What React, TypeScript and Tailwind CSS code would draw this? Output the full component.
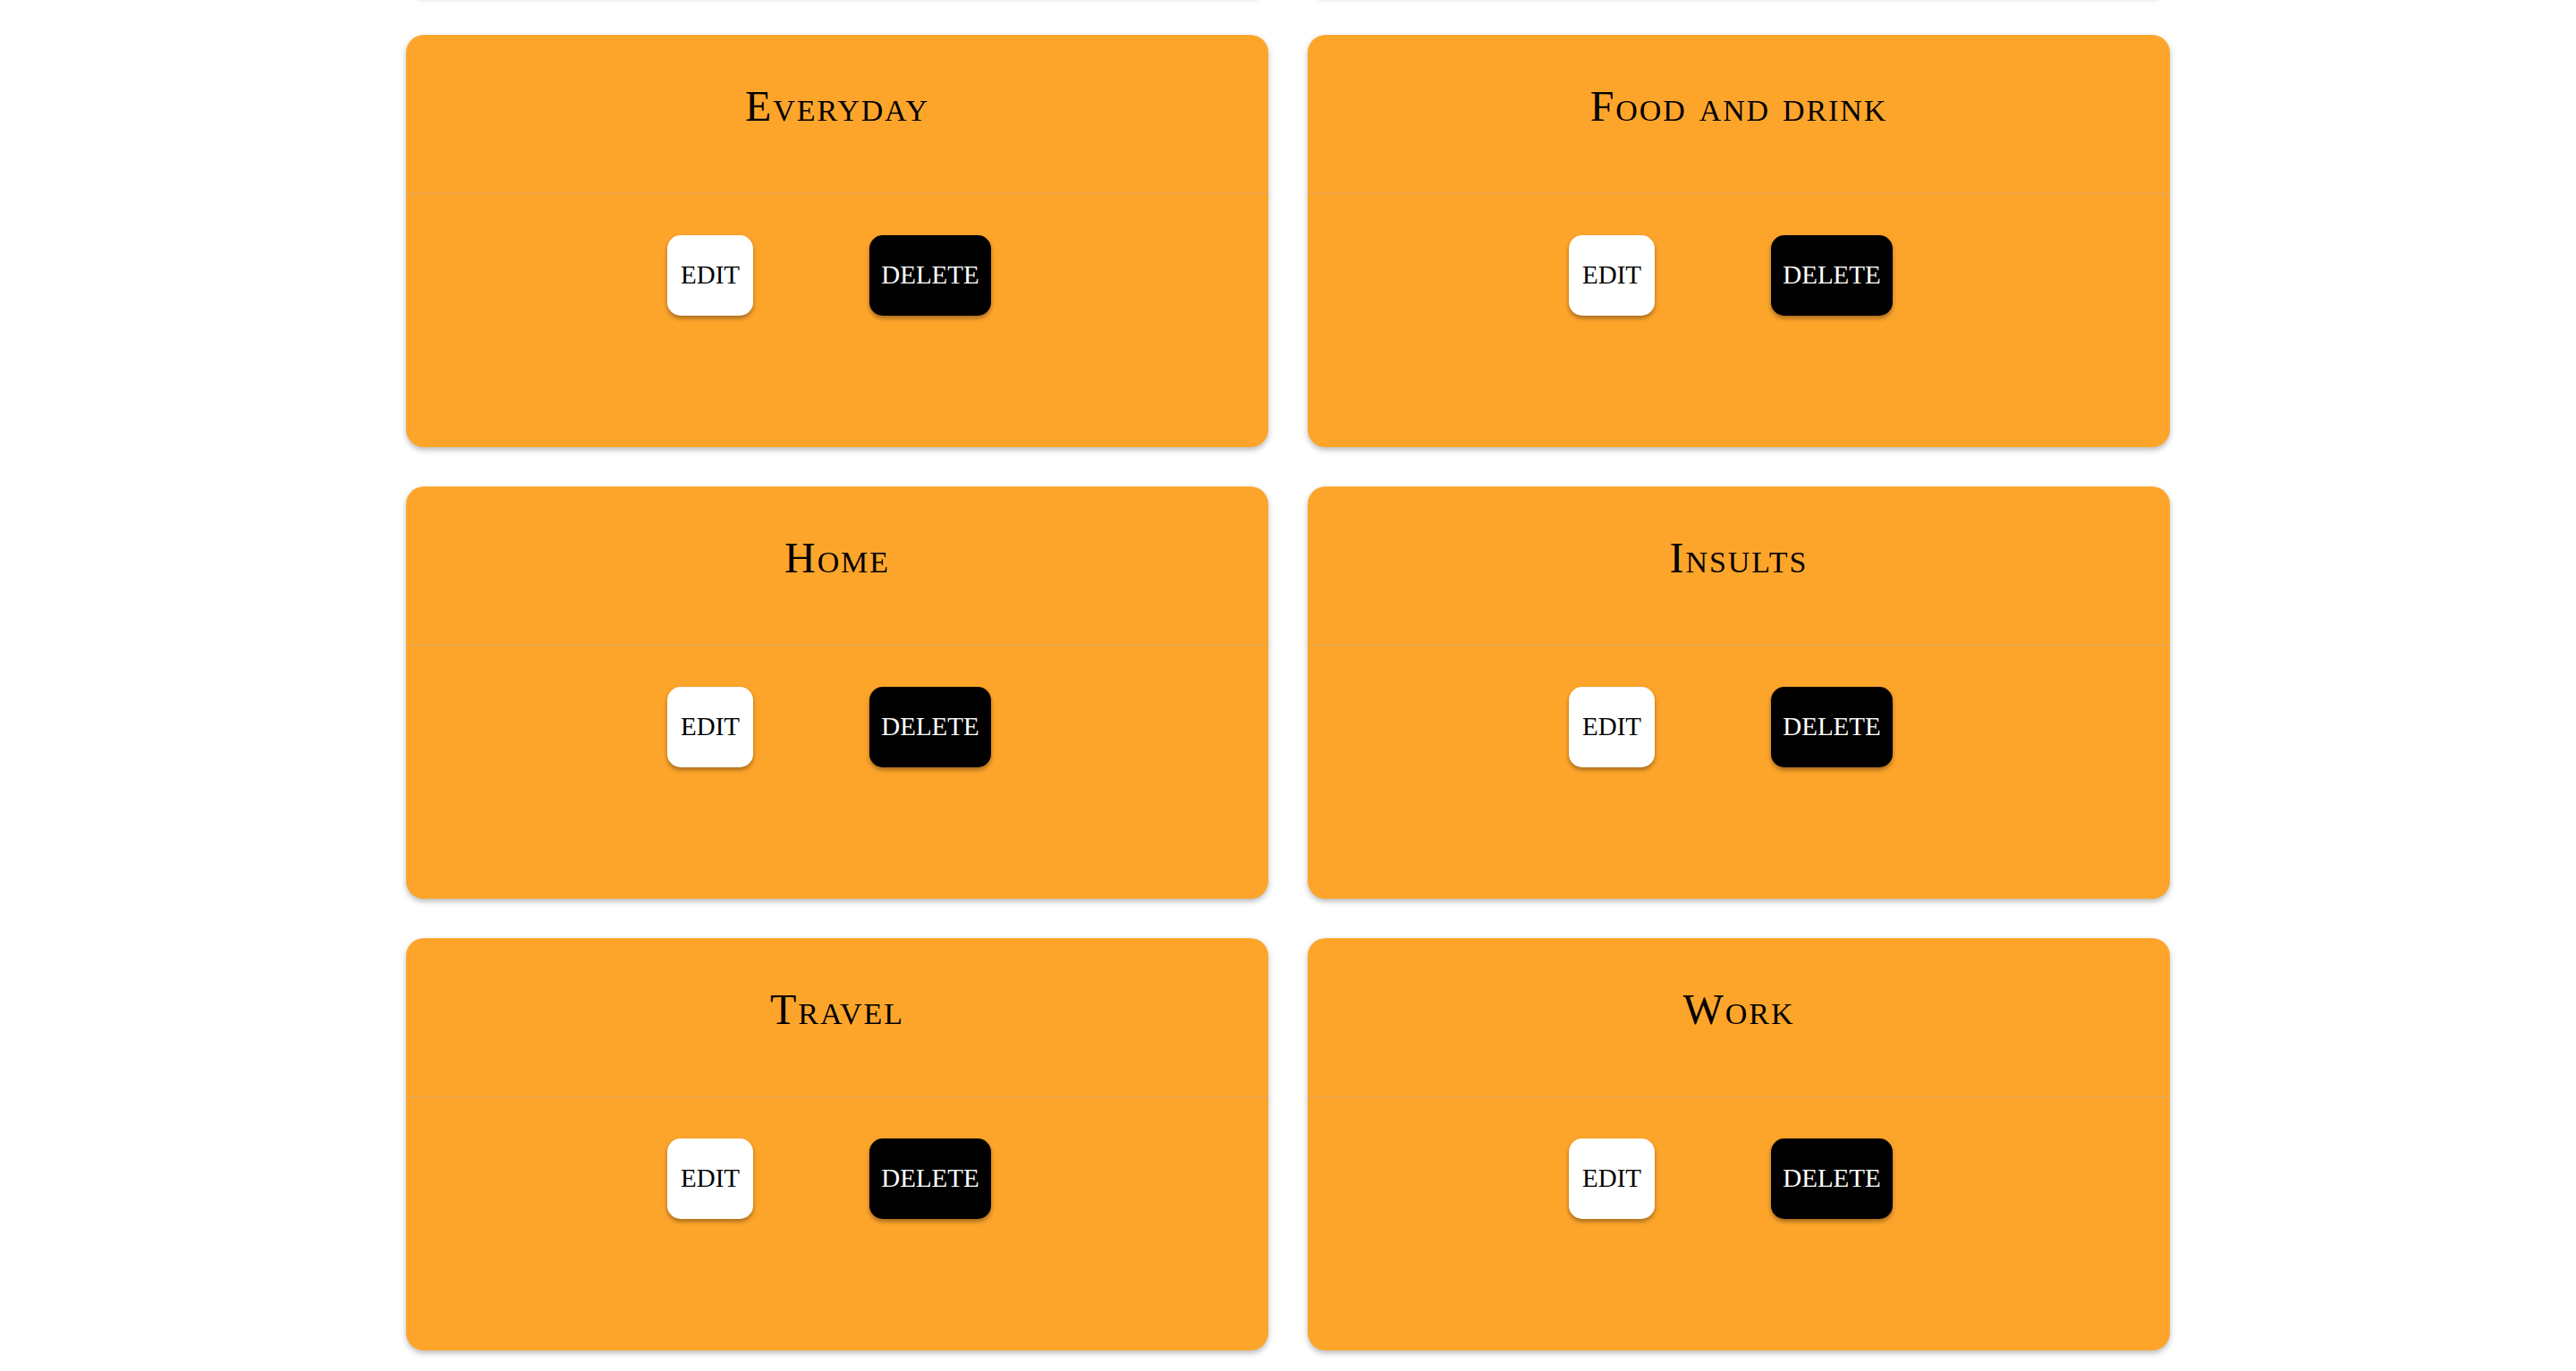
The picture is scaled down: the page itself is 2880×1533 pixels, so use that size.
const categories = ["Everyday", "Food and drink", "Home", "Insults", "Travel", "Work"];

function CategoryCard({ name }: { name: string }) {
  return (
    <div className="h-[461px] rounded-[20px] bg-[#fda52b] shadow-[0_3px_6px_rgba(0,0,0,0.28)] flex flex-col">
      <div className="h-[178px] border-b border-[#dfa45e] pt-[51px] text-center">
        <h2 className="text-[48px] leading-[1.2] tracking-[0.04em] [font-variant:small-caps] text-black font-normal">
          {name}
        </h2>
      </div>
      <div className="flex items-start pt-[46px] pl-[292px] gap-[130px]">
        <button className="w-[96px] h-[90px] rounded-[15px] bg-white text-black text-[29px] shadow-[0_3px_5px_rgba(0,0,0,0.35)]">
          EDIT
        </button>
        <button className="w-[136px] h-[90px] rounded-[15px] bg-black text-white text-[29px] shadow-[0_3px_5px_rgba(0,0,0,0.35)]">
          DELETE
        </button>
      </div>
    </div>
  );
}

export default function App() {
  return (
    <div
      className="min-h-[1533px] bg-white overflow-hidden"
      style={{ fontFamily: '"Liberation Serif", "DejaVu Serif", serif' }}
    >
      <div className="w-[1972px] mx-auto -mt-[466px] grid grid-cols-2 gap-x-[44px] gap-y-[44px]">
        {/* row above, scrolled out of view */}
        <div className="h-[461px] rounded-[20px] bg-[#fda52b] shadow-[0_3px_6px_rgba(0,0,0,0.28)]" />
        <div className="h-[461px] rounded-[20px] bg-[#fda52b] shadow-[0_3px_6px_rgba(0,0,0,0.28)]" />
        {categories.map((c) => (
          <CategoryCard key={c} name={c} />
        ))}
      </div>
    </div>
  );
}
